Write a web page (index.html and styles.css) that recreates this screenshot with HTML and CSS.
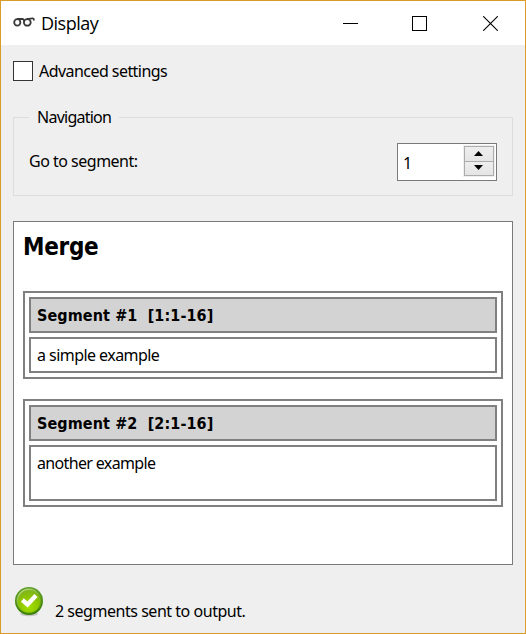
FILE: index.html
```html
<!DOCTYPE html>
<html lang="en">
<head>
<meta charset="utf-8">
<title>Display</title>
<link rel="stylesheet" href="styles.css">
</head>
<body>
<div class="window">
  <header class="titlebar">
    <svg class="glasses" width="22" height="12" viewBox="0 0 22 12" fill="none" stroke="#383838" stroke-width="1.8" stroke-linecap="round">
      <ellipse cx="4.3" cy="6.4" rx="3.1" ry="3.3"/>
      <ellipse cx="14.3" cy="6.4" rx="3.4" ry="3.3"/>
      <path d="M4.8 3H9.6C10.6 3 10.9 3.4 10.9 4.6M14.6 3C17 2.6 18.8 2.2 19.8 2.4C20.7 2.6 20.9 3.2 20.9 3.8"/>
    </svg>
    <h1 class="title">Display</h1>
    <div class="controls">
      <svg width="15" height="15" shape-rendering="crispEdges"><path d="M0 7.5H15" stroke="#000"/></svg>
      <svg width="15" height="15" shape-rendering="crispEdges"><rect x=".5" y=".5" width="14" height="14" fill="none" stroke="#000"/></svg>
      <svg width="15" height="15"><path d="M.2.2L14.8 14.8M14.8.2L.2 14.8" stroke="#000" stroke-width="1.1"/></svg>
    </div>
  </header>
  <main class="content">
    <label class="advanced"><span class="checkbox"></span><span class="advanced-text">Advanced settings</span></label>
    <section class="group">
      <h2 class="legend">Navigation</h2>
      <div class="row">
        <span class="goto">Go to segment:</span>
        <div class="spinner">
          <span class="value">1</span>
          <div class="steps">
            <div class="step"><svg width="9" height="5"><path d="M0 5L4.5 0L9 5Z"/></svg></div>
            <div class="step"><svg width="9" height="5"><path d="M0 0L4.5 5L9 0Z"/></svg></div>
          </div>
        </div>
      </div>
    </section>
    <section class="output">
      <h2 class="merge">Merge</h2>
      <div class="segment">
        <div class="cell head">Segment #1  [1:1-16]</div>
        <div class="cell text-a">a simple example</div>
      </div>
      <div class="segment">
        <div class="cell head">Segment #2  [2:1-16]</div>
        <div class="cell tall text-b">another example</div>
      </div>
    </section>
    <footer class="status">
      <svg width="30" height="32" viewBox="0 0 30 32">
        <defs>
          <radialGradient id="green" cx=".5" cy=".75" r=".7">
            <stop offset="0" stop-color="#a2e000"/>
            <stop offset=".65" stop-color="#8cc400"/>
            <stop offset="1" stop-color="#7fb61c"/>
          </radialGradient>
          <linearGradient id="rim" x2="0" y2="1">
            <stop offset="0" stop-color="#619f2b"/>
            <stop offset="1" stop-color="#347d00"/>
          </linearGradient>
          <linearGradient id="ring" x2=".6" y2="1">
            <stop offset="0" stop-color="#cbe69a"/>
            <stop offset=".6" stop-color="#74ac1e"/>
            <stop offset="1" stop-color="#5f9c0c"/>
          </linearGradient>
        </defs>
        <ellipse cx="16" cy="28" rx="9" ry="2.2" fill="#c4c4c4"/>
        <circle cx="16" cy="15" r="14" fill="url(#rim)"/>
        <circle cx="16" cy="15" r="12.4" fill="url(#ring)"/>
        <circle cx="16" cy="15.3" r="11.2" fill="url(#green)"/>
        <path d="M9.3 14L14.5 18.5L23 9.5" fill="none" stroke="#fff" stroke-width="4.4"/>
      </svg>
      <span class="status-text">2 segments sent to output.</span>
    </footer>
  </main>
</div>
</body>
</html>
```
FILE: styles.css
```css
* { box-sizing: border-box; }
body {
  margin: 0;
  font: 16px/20px "Noto Sans", sans-serif;
  color: #000;
}
h1, h2 { margin: 0; font-weight: normal; }
svg { display: block; flex: none; }
.window {
  height: 634px;
  border: 1px solid #d99c28;
  background: #efefef;
  overflow: hidden;
}
.titlebar {
  display: flex;
  align-items: center;
  height: 44px;
  padding: 0 27px 0 12px;
  background: #fff;
}
.glasses { margin-top: -3px; }
.title {
  margin-left: 6px;
  font: 18px/24px "Open Sans", sans-serif;
  letter-spacing: -.5px;
}
.controls { display: flex; gap: 55px; margin-left: auto; }
.controls svg:nth-child(2) { margin: 0 1px 0 -1px; }
.content { padding: 16px 12px 0; }
.advanced { display: flex; height: 20px; gap: 6px; }
.checkbox { width: 20px; height: 20px; border: 1px solid #333; background: #fff; }
.advanced-text { letter-spacing: -.55px; }
.group {
  height: 79px;
  margin-top: 36px;
  border: 1px solid #dcdcdc;
}
.legend {
  width: 90px;
  height: 20px;
  margin: -11px 0 0 15px;
  padding-left: 8px;
  background: #efefef;
  font-size: 16px;
  letter-spacing: -.75px;
}
.row {
  display: flex;
  justify-content: space-between;
  padding: 16px 15px 0;
}
.goto { margin-top: 8px; letter-spacing: -.5px; }
.spinner {
  display: flex;
  justify-content: space-between;
  width: 100px;
  height: 38px;
  padding: 1px 1px 3px 5px;
  border: 1px solid #7a7a7a;
  background: #fff;
}
.value { margin-top: 8px; }
.steps {
  width: 32px;
  height: 32px;
  border: 1px solid #efefef;
}
.step {
  display: grid;
  place-items: center;
  height: 16px;
  padding: 0 2px 2px 0;
  border: 1px solid #acacac;
  background: linear-gradient(#eee, #e5e5e5);
}
.step + .step { height: 15px; margin-top: -1px; }
.output {
  height: 344px;
  margin-top: 25px;
  padding: 9px;
  border: 1px solid #7a7a7a;
  background: #fff;
}
.merge {
  height: 60px;
  font: bold 24px/33px "DejaVu Sans Condensed", "DejaVu Sans", sans-serif;
  letter-spacing: -.3px;
}
.segment {
  display: grid;
  gap: 4px;
  padding: 4px;
  border: 2px solid #808080;
}
.segment + .segment { margin-top: 20px; }
.cell {
  height: 36px;
  padding: 6px;
  border: 2px solid #808080;
  white-space: pre;
}
.head {
  background: #d3d3d3;
  font: bold 16px/22px "DejaVu Sans Condensed", "DejaVu Sans", sans-serif;
  letter-spacing: .1px;
}
.tall { height: 56px; }
.text-a { letter-spacing: -.55px; }
.text-b { letter-spacing: -.65px; }
.status { display: flex; margin-top: 21px; gap: 12px; }
.status-text { margin-top: 15px; letter-spacing: -.47px; }
```
